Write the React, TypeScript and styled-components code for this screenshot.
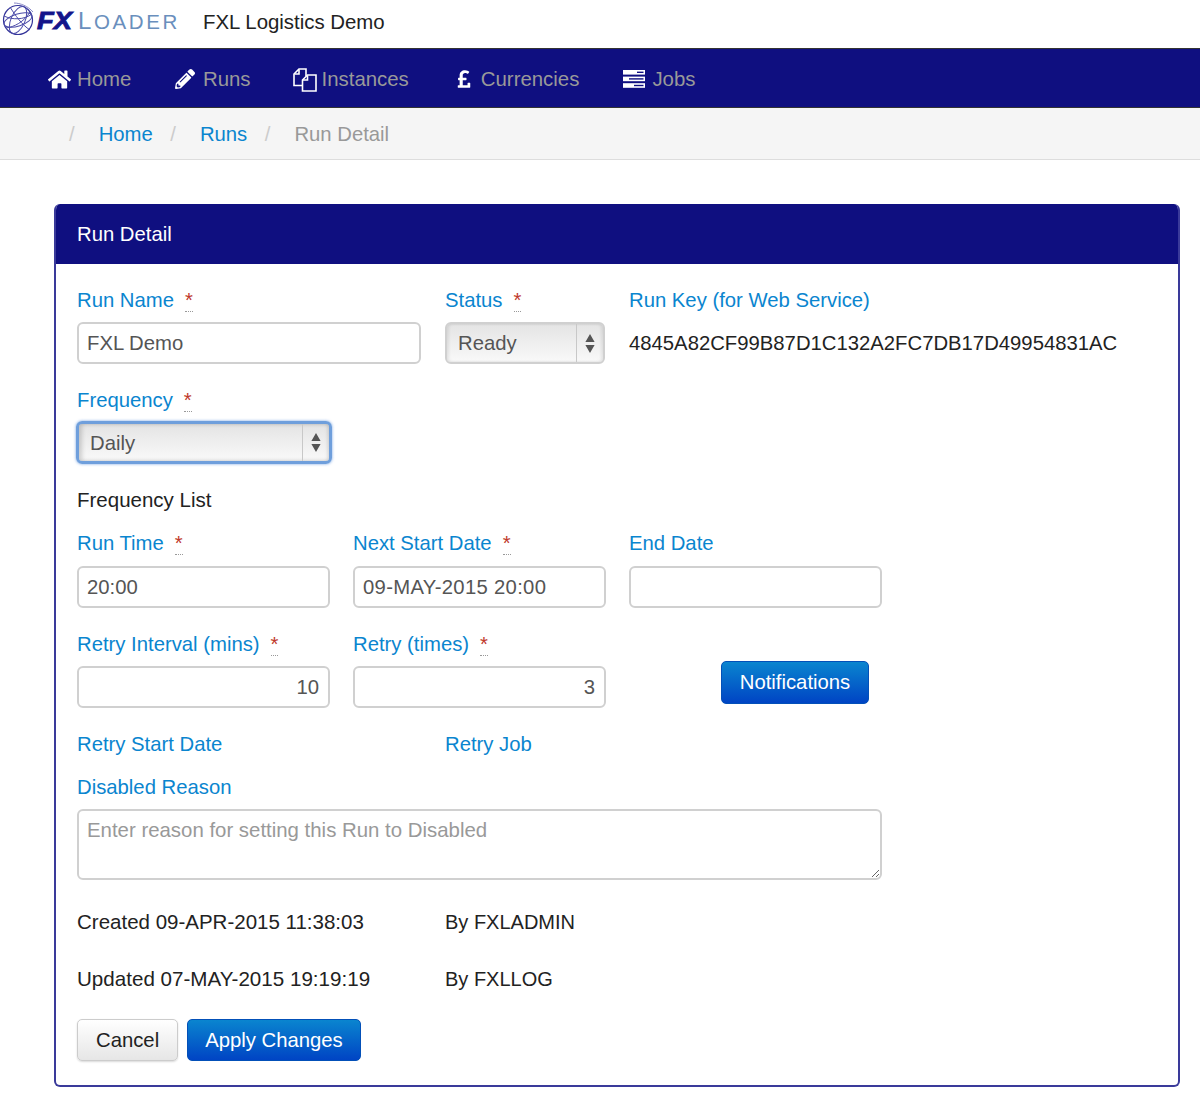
import React, { FC } from 'react';
import styled, { createGlobalStyle, css } from 'styled-components';
import { FaHome, FaPencilAlt, FaPoundSign } from 'react-icons/fa';

const colors = {
    navy: '#0f0f80',
    panelBorder: '#3a3a9a',
    link: '#0a85cf',
    text: '#222222',
    inputText: '#555555',
    inputBorder: '#d0d0d0',
    navText: '#999999',
};

const GlobalStyle = createGlobalStyle`
    html, body {
        margin: 0;
        background: #fff;
        font-family: 'Liberation Sans', Arial, sans-serif;
        font-size: 20.3px;
        line-height: 24px;
        color: ${colors.text};
    }
`;

const Header = styled.header`
    height: 44px;
    padding: 0 0 4px 2px;
    display: flex;
    align-items: center;
`;

const Logo = styled.div`
    display: flex;
    align-items: center;
    width: 201px;
    height: 44px;
`;

const GlobeWrap = styled.span`
    display: flex;
    margin-top: -6px;
`;

const LogoFx = styled.span`
    display: inline-block;
    width: 41px;
    margin-left: 2px;
    font-size: 24px;
    font-weight: 700;
    font-style: italic;
    color: #14148a;
    -webkit-text-stroke: 0.9px #14148a;
    transform: scaleX(1.14);
    transform-origin: left center;
    margin-top: -3px;
`;

const LogoLoader = styled.span`
    font-size: 20.5px;
    color: #6a8fbd;
    letter-spacing: 2.6px;
    margin-top: -1px;

    &::first-letter {
        font-size: 24px;
    }
`;

const AppTitle = styled.div`
    font-size: 20.4px;
`;

const Navbar = styled.nav`
    height: 56px;
    padding: 2px 0 0 48px;
    background: ${colors.navy};
    border-top: 1px solid #333;
    border-bottom: 1px solid #333;
    display: flex;
    align-items: center;
`;

const NavItem = styled.a<{ $left: number }>`
    display: flex;
    align-items: center;
    margin-left: ${({ $left }) => $left}px;
    color: ${colors.navText};
    font-size: 20.4px;
`;

const NavIcon = styled.span<{ $width: number }>`
    display: flex;
    align-items: center;
    width: ${({ $width }) => $width}px;
    color: #fff;
`;

const Breadcrumb = styled.div`
    height: 51px;
    background: #f5f5f5;
    border-bottom: 1px solid #dddddd;
    display: flex;
    align-items: center;
    padding-left: 69px;
`;

const Slash = styled.span`
    color: #cccccc;
    margin-right: 24px;
`;

const CrumbLink = styled.a`
    color: ${colors.link};
    margin-right: 17.5px;
`;

const CrumbCurrent = styled.span`
    color: #999999;
`;

const Panel = styled.section`
    margin: 44px 20px 0 54px;
    border: 2px solid ${colors.panelBorder};
    border-top: none;
    border-radius: 6px;
    overflow: hidden;
`;

const PanelTitle = styled.h2`
    margin: 0 -2px;
    height: 60px;
    padding-left: 23px;
    display: flex;
    align-items: center;
    background: ${colors.navy};
    color: #fff;
    font-size: 20.3px;
    font-weight: 400;
`;

const PanelBody = styled.div`
    padding: 24px 0 24px 21px;
`;

const Row = styled.div<{ $top?: number }>`
    display: grid;
    grid-template-columns: repeat(12, 68px);
    column-gap: 24px;
    margin-top: ${({ $top }) => $top ?? 0}px;
`;

const Cell = styled.div<{ $span: number; $start?: number }>`
    grid-column: ${({ $start }) => ($start ? `${$start} /` : '')} span ${({ $span }) => $span};
    min-width: 0;
`;

const Label = styled.label<{ $tall?: boolean }>`
    display: block;
    height: ${({ $tall }) => ($tall ? 25 : 24)}px;
    color: ${colors.link};
    white-space: nowrap;
`;

const Required = styled.abbr`
    display: inline-block;
    margin-left: 11px;
    height: 21px;
    line-height: 20px;
    color: #c0392b;
    border-bottom: 1px dotted #999;
    text-decoration: none;
`;

const controlBase = css`
    box-sizing: border-box;
    display: block;
    width: 100%;
    height: 42px;
    margin-top: 10px;
    padding: 0 9px 0 8px;
    border: 2px solid ${colors.inputBorder};
    border-radius: 6px;
    background: #fff;
    color: ${colors.inputText};
    font-family: inherit;
    font-size: 20.3px;
    outline: none;
`;

const Input = styled.input<{ $right?: boolean; $wide?: boolean; $spread?: boolean }>`
    ${controlBase}
    text-align: ${({ $right }) => ($right ? 'right' : 'left')};
    width: ${({ $wide }) => ($wide ? 'calc(100% + 1px)' : '100%')};
    letter-spacing: ${({ $spread }) => ($spread ? '0.3px' : 'normal')};
`;

const TextArea = styled.textarea`
    ${controlBase}
    width: calc(100% + 1px);
    height: 71px;
    padding: 7px 8px;
    font-size: 20.4px;
    line-height: 24px;
    resize: vertical;

    &::placeholder {
        color: #999999;
    }
`;

const SelectBox = styled.div<{ $focus?: boolean }>`
    box-sizing: border-box;
    display: flex;
    align-items: stretch;
    height: 42px;
    margin-top: 10px;
    border: 2px solid ${colors.inputBorder};
    border-radius: 6px;
    background: linear-gradient(#e4e4e4, #f9f9f9);
    box-shadow: inset 2px 0 3px rgba(0, 0, 0, 0.08), inset -2px 0 3px rgba(0, 0, 0, 0.08);
    color: ${colors.inputText};

    ${({ $focus }) =>
        $focus &&
        css`
            width: calc(100% + 4px);
            height: 43px;
            margin: 9px 0 0 -1px;
            border-color: #6f9fdc;
            border-width: 3px;
            box-shadow: inset 3px 0 4px rgba(0, 0, 0, 0.16), inset -2px 0 3px rgba(0, 0, 0, 0.1),
                0 0 3px rgba(82, 140, 220, 0.8);
        `}
`;

const SelectValue = styled.div`
    flex: 1;
    display: flex;
    align-items: center;
    padding-left: 11px;
`;

const SelectArrows = styled.div`
    flex: 0 0 26px;
    display: flex;
    align-items: center;
    justify-content: center;
    border-left: 1px solid #c8c8c8;
`;

const PlainValue = styled.div`
    height: 42px;
    margin-top: 10px;
    display: flex;
    align-items: center;
    white-space: nowrap;
`;

const TextLine = styled.div<{ $size?: number }>`
    height: 24px;
    font-size: ${({ $size }) => $size ?? 20.3}px;
    white-space: nowrap;
`;

const Button = styled.button<{ $primary?: boolean }>`
    box-sizing: border-box;
    height: 42px;
    padding: 0 17px;
    border-radius: 5px;
    font-family: inherit;
    font-size: 20.3px;
    cursor: pointer;
    ${({ $primary }) =>
        $primary
            ? css`
                  border: 1px solid #0350b8;
                  background: linear-gradient(#0a85cf, #0044c4);
                  color: #fff;
              `
            : css`
                  padding: 0 18px;
                  border: 1px solid #cccccc;
                  background: linear-gradient(#ffffff, #e6e6e6);
                  color: ${colors.text};
                  box-shadow: 0 1px 2px rgba(0, 0, 0, 0.15);
              `}
`;

const NotificationsButton = styled(Button)`
    display: block;
    height: 43px;
    margin-top: 29px;
    width: 148px;
    padding: 0;
`;

const ButtonRow = styled.div`
    display: flex;
    gap: 9px;
    margin-top: 28px;
`;

const Globe = () => (
    <svg width="33" height="34" viewBox="0 0 33 34" fill="none" stroke="#4a4aa8" strokeWidth="1">
        <circle cx="16" cy="18" r="14.5" stroke="#35359a" strokeWidth="1.2" />
        <ellipse cx="16" cy="18" rx="7" ry="14.5" transform="rotate(24 16 18)" />
        <ellipse cx="16" cy="18" rx="14.5" ry="6" transform="rotate(-18 16 18)" />
        <path d="M2 14c8 4 20 4 28-2M4 26c8-1 18-6 24-16M8 5c5 8 12 18 20 23" />
        <path d="M12 1c6 0 14 3 19 9" stroke="#8a8ac8" />
    </svg>
);

const CopyIcon = () => (
    <svg width="25" height="25" viewBox="0 0 25 25" fill="none" stroke="#fff" strokeWidth="1.6">
        <path d="M10 18.5H2V7l5-5h7v7" />
        <path d="M7 2.5V7H2.5" />
        <path d="M10.5 13l5-5h8.5v16H10.5z" />
        <path d="M15.5 8.5V13H11" />
    </svg>
);

const JobsIcon = () => (
    <svg width="22" height="18" viewBox="0 0 22 18">
        <rect y="0" width="22" height="4.6" fill="#fff" />
        <rect y="6.6" width="22" height="4.6" fill="#fff" />
        <rect y="13.2" width="22" height="4.6" fill="#fff" />
        <rect x="14" y="1.6" width="6.5" height="1.4" fill="#0f0f80" />
        <rect x="6" y="8.2" width="14.5" height="1.4" fill="#0f0f80" />
        <rect x="11" y="14.8" width="9.5" height="1.4" fill="#0f0f80" />
    </svg>
);

const UpDownArrows = () => (
    <svg width="10" height="19" viewBox="0 0 10 19" fill="#555555">
        <path d="M5 0l4.6 8H.4zM5 19L.4 11h9.2z" />
    </svg>
);

interface IField {
    label: string;
    required?: boolean;
    tall?: boolean;
    children?: React.ReactNode;
}

const Field: FC<IField> = ({ label, required, tall, children }) => (
    <>
        <Label $tall={tall}>
            {label}
            {required && <Required title="required">*</Required>}
        </Label>
        {children}
    </>
);

interface ISelect {
    value: string;
    focus?: boolean;
}

const Select: FC<ISelect> = ({ value, focus }) => (
    <SelectBox $focus={focus}>
        <SelectValue>{value}</SelectValue>
        <SelectArrows>
            <UpDownArrows />
        </SelectArrows>
    </SelectBox>
);

const App: FC = () => (
    <>
        <GlobalStyle />
        <Header>
            <Logo>
                <GlobeWrap>
                    <Globe />
                </GlobeWrap>
                <LogoFx>FX</LogoFx>
                <LogoLoader>LOADER</LogoLoader>
            </Logo>
            <AppTitle>FXL Logistics Demo</AppTitle>
        </Header>
        <Navbar>
            <NavItem $left={0}>
                <NavIcon $width={29}>
                    <FaHome size={23} />
                </NavIcon>
                Home
            </NavItem>
            <NavItem $left={43.5}>
                <NavIcon $width={28}>
                    <FaPencilAlt size={20} />
                </NavIcon>
                Runs
            </NavItem>
            <NavItem $left={41}>
                <NavIcon $width={30}>
                    <CopyIcon />
                </NavIcon>
                Instances
            </NavItem>
            <NavItem $left={45.5}>
                <NavIcon $width={26.5}>
                    <FaPoundSign size={20} />
                </NavIcon>
                Currencies
            </NavItem>
            <NavItem $left={44}>
                <NavIcon $width={29}>
                    <JobsIcon />
                </NavIcon>
                Jobs
            </NavItem>
        </Navbar>
        <Breadcrumb>
            <Slash>/</Slash>
            <CrumbLink>Home</CrumbLink>
            <Slash>/</Slash>
            <CrumbLink>Runs</CrumbLink>
            <Slash>/</Slash>
            <CrumbCurrent>Run Detail</CrumbCurrent>
        </Breadcrumb>
        <Panel>
            <PanelTitle>Run Detail</PanelTitle>
            <PanelBody>
                <Row>
                    <Cell $span={4}>
                        <Field label="Run Name" required>
                            <Input readOnly value="FXL Demo" />
                        </Field>
                    </Cell>
                    <Cell $span={2}>
                        <Field label="Status" required>
                            <Select value="Ready" />
                        </Field>
                    </Cell>
                    <Cell $span={6}>
                        <Field label="Run Key (for Web Service)">
                            <PlainValue>4845A82CF99B87D1C132A2FC7DB17D49954831AC</PlainValue>
                        </Field>
                    </Cell>
                </Row>
                <Row $top={24}>
                    <Cell $span={3}>
                        <Field label="Frequency" required>
                            <Select value="Daily" focus />
                        </Field>
                    </Cell>
                </Row>
                <Row $top={24}>
                    <Cell $span={3}>
                        <TextLine $size={20.5}>Frequency List</TextLine>
                    </Cell>
                </Row>
                <Row $top={19}>
                    <Cell $span={3}>
                        <Field label="Run Time" required tall>
                            <Input readOnly $wide value="20:00" />
                        </Field>
                    </Cell>
                    <Cell $span={3}>
                        <Field label="Next Start Date" required tall>
                            <Input readOnly $wide $spread value="09-MAY-2015 20:00" />
                        </Field>
                    </Cell>
                    <Cell $span={3}>
                        <Field label="End Date" tall>
                            <Input readOnly $wide value="" />
                        </Field>
                    </Cell>
                </Row>
                <Row $top={24}>
                    <Cell $span={3}>
                        <Field label="Retry Interval (mins)" required>
                            <Input readOnly $wide $right value="10" />
                        </Field>
                    </Cell>
                    <Cell $span={3}>
                        <Field label="Retry (times)" required>
                            <Input readOnly $wide $right value="3" />
                        </Field>
                    </Cell>
                    <Cell $span={2} $start={8}>
                        <NotificationsButton $primary>Notifications</NotificationsButton>
                    </Cell>
                </Row>
                <Row $top={24}>
                    <Cell $span={4}>
                        <Field label="Retry Start Date" />
                    </Cell>
                    <Cell $span={4}>
                        <Field label="Retry Job" />
                    </Cell>
                </Row>
                <Row $top={19}>
                    <Cell $span={9}>
                        <Field label="Disabled Reason">
                            <TextArea
                                readOnly
                                placeholder="Enter reason for setting this Run to Disabled"
                            />
                        </Field>
                    </Cell>
                </Row>
                <Row $top={30}>
                    <Cell $span={4}>
                        <TextLine $size={20.5}>Created 09-APR-2015 11:38:03</TextLine>
                    </Cell>
                    <Cell $span={4}>
                        <TextLine $size={20}>By FXLADMIN</TextLine>
                    </Cell>
                </Row>
                <Row $top={33}>
                    <Cell $span={4}>
                        <TextLine $size={20.6}>Updated 07-MAY-2015 19:19:19</TextLine>
                    </Cell>
                    <Cell $span={4}>
                        <TextLine $size={20}>By FXLLOG</TextLine>
                    </Cell>
                </Row>
                <ButtonRow>
                    <Button>Cancel</Button>
                    <Button $primary>Apply Changes</Button>
                </ButtonRow>
            </PanelBody>
        </Panel>
    </>
);

export default App;
